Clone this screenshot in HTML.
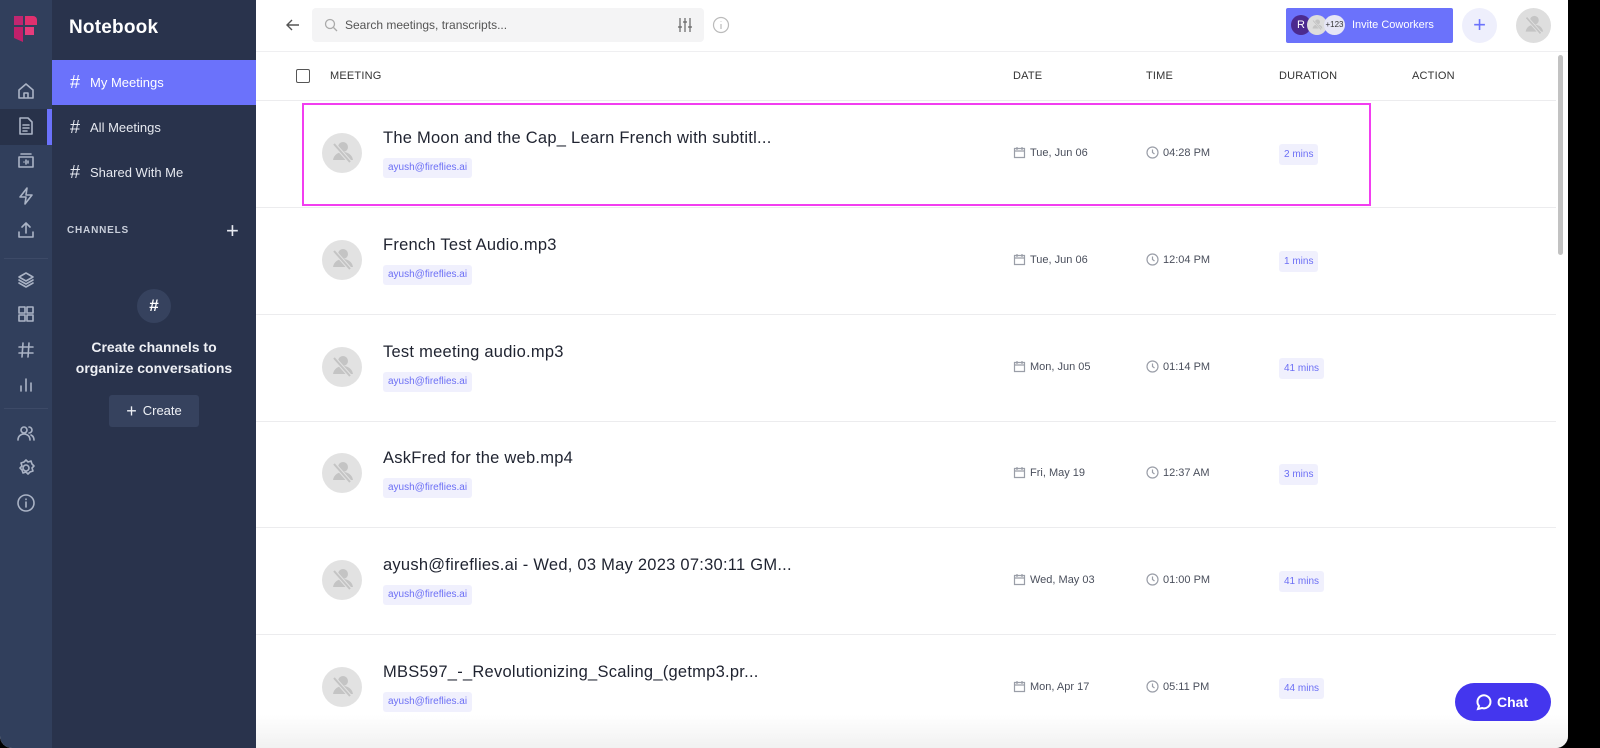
<!DOCTYPE html>
<html><head><meta charset="utf-8"><style>
*{box-sizing:border-box;margin:0;padding:0}
body{width:1600px;height:748px;background:#000;font-family:"Liberation Sans",sans-serif;overflow:hidden;position:relative}
.win{position:absolute;left:0;top:0;width:1568px;height:748px;background:#fff;border-radius:0 0 12px 12px;overflow:hidden}
.rail{position:absolute;left:0;top:0;width:52px;height:748px;background:#313f5c}
.side{position:absolute;left:52px;top:0;width:204px;height:748px;background:#29334c;color:#fff}
.ic{position:absolute;left:16px;width:20px;height:20px}
.ic svg{width:20px;height:20px;fill:none;stroke:#aab3c5;stroke-width:1.6;stroke-linecap:round;stroke-linejoin:round}
.nav{position:absolute;left:0;width:204px;height:45px;font-size:13px;display:flex;align-items:center;padding-left:18px;color:#e6e9f0}
.nav b{font-weight:normal;font-size:18px;margin-right:10px}
.main{position:absolute;left:256px;top:0;width:1312px;height:748px}
.row{position:absolute;left:0;width:1300px;height:107px;border-bottom:1px solid #ececee}
.av{position:absolute;left:66px;top:32px;width:40px;height:40px;border-radius:50%;background:#e2e2e2}
.av svg{width:40px;height:40px}
.title{position:absolute;left:127px;top:28px;font-size:16.5px;color:#1f2330;letter-spacing:.25px}
.tag{position:absolute;left:127px;top:57px;height:20px;padding:0 5px;background:#f0f0fd;color:#6c6ff5;font-size:10px;line-height:20px;border-radius:3px}
.dt{position:absolute;top:45px;font-size:11px;color:#4a4f5c;display:flex;align-items:center}
.dt svg{width:13px;height:13px;margin-right:4px;fill:none;stroke:#9a9ea8;stroke-width:1.2}
.dur{position:absolute;left:1023px;top:43px;height:21px;padding:0 5px;background:#f0f0fd;color:#6c6ff5;font-size:10px;line-height:21px;border-radius:3px}
.hd{position:absolute;top:70px;font-size:11px;color:#333;letter-spacing:.2px}
</style></head><body><div class="win">
<svg width="0" height="0" style="position:absolute"><defs><symbol id="p" viewBox="0 0 40 40"><circle cx="21" cy="14" r="5" fill="#c4c4c4"/><path d="M11 27c1-6 6-8 10-8s9 2 10 8z" fill="#c4c4c4"/><path d="M12 11l16 18" stroke="#e2e2e2" stroke-width="4"/><path d="M12 11l16 18" stroke="#c4c4c4" stroke-width="2"/></symbol></defs></svg>
<div class="rail">
<svg style="position:absolute;left:12px;top:14px" width="26" height="30" viewBox="0 0 26 30"><path d="M2 2h9v9H2z" fill="#c02670"/><path d="M13 2h8a4 4 0 0 1 4 4v5H13z" fill="#e0306e"/><path d="M2 13h9v15l-9-4z" fill="#c0206a"/><path d="M13 13h9v8h-9z" fill="#e73c7c"/></svg>
<div class="ic" style="top:81px"><svg viewBox="0 0 20 20"><path d="M3 9l7-6 7 6v8H3z M8 17v-5h4v5"/></svg></div>
<div style="position:absolute;left:0;top:109px;width:52px;height:36px;background:#28324a"></div>
<div style="position:absolute;left:47px;top:109px;width:5px;height:36px;background:#6b72fb"></div>
<div class="ic" style="top:116px"><svg viewBox="0 0 20 20"><path d="M4 2h8l4 4v12H4z M7 9h6 M7 12h6 M7 15h4"/></svg></div>
<div class="ic" style="top:151px"><svg viewBox="0 0 20 20"><path d="M5 3h10 M3 6h14v10H3z M8 11v0 M10 9v4 M12 10v2"/></svg></div>
<div class="ic" style="top:186px"><svg viewBox="0 0 20 20"><path d="M11 2L4 11h6l-1 7 7-9h-6z"/></svg></div>
<div class="ic" style="top:220px"><svg viewBox="0 0 20 20"><path d="M3 12v5h14v-5 M10 3v10 M6 7l4-4 4 4"/></svg></div>
<div style="position:absolute;left:4px;top:258px;width:44px;height:1px;background:#3d4a67"></div>
<div class="ic" style="top:270px"><svg viewBox="0 0 20 20"><path d="M10 3l7 4-7 4-7-4z M3 10l7 4 7-4 M3 13l7 4 7-4"/></svg></div>
<div class="ic" style="top:304px"><svg viewBox="0 0 20 20"><path d="M3 3h6v6H3z M11 3h6v6h-6z M3 11h6v6H3z M11 11h6v6h-6z"/></svg></div>
<div class="ic" style="top:340px"><svg viewBox="0 0 20 20"><path d="M7 3l-1 14 M13 3l-1 14 M3 7h14 M3 13h14"/></svg></div>
<div class="ic" style="top:374px"><svg viewBox="0 0 20 20"><path d="M5 17v-5 M10 17V5 M15 17v-8"/></svg></div>
<div style="position:absolute;left:4px;top:408px;width:44px;height:1px;background:#3d4a67"></div>
<div class="ic" style="top:423px"><svg viewBox="0 0 20 20"><circle cx="8" cy="7" r="3"/><path d="M2 17c0-4 3-6 6-6s6 2 6 6 M13 4a3 3 0 0 1 0 6 M15 12c2 1 3 3 3 5"/></svg></div>
<div class="ic" style="top:458px"><svg viewBox="0 0 20 20"><circle cx="10" cy="10" r="3"/><path d="M10 2l2 2 3-1 1 3 2 2-2 2 1 3-3 1-2 2-2-2-3 1-1-3-2-2 2-2-1-3 3-1z"/></svg></div>
<div class="ic" style="top:493px"><svg viewBox="0 0 20 20"><circle cx="10" cy="10" r="8"/><path d="M10 9v5 M10 6v.5"/></svg></div>
</div>
<div class="side">
<div style="position:absolute;left:17px;top:17px;font-size:19px;font-weight:bold;letter-spacing:.2px">Notebook</div>
<div class="nav" style="top:60px;background:#6b72fb;color:#fff"><b>#</b>My Meetings</div>
<div class="nav" style="top:105px"><b>#</b>All Meetings</div>
<div class="nav" style="top:150px"><b>#</b>Shared With Me</div>
<div style="position:absolute;left:15px;top:225px;font-size:10px;font-weight:bold;color:#c9cfdb;letter-spacing:.8px">CHANNELS</div>
<div style="position:absolute;left:174px;top:218px;font-size:22px;color:#e6e9f0">+</div>
<div style="position:absolute;left:85px;top:289px;width:34px;height:34px;border-radius:50%;background:#36425e;text-align:center;line-height:34px;font-size:17px;font-weight:bold">#</div>
<div style="position:absolute;left:0;top:337px;width:204px;text-align:center;font-size:14px;font-weight:bold;line-height:21px;color:#eef0f5">Create channels to<br>organize conversations</div>
<div style="position:absolute;left:57px;top:395px;width:90px;height:32px;background:#36425e;border-radius:3px;font-size:13px;line-height:32px;text-align:center;color:#eef0f5"><span style="font-size:18px;vertical-align:-2px;margin-right:6px">+</span>Create</div>
</div>
<div class="main">
<svg style="position:absolute;left:29px;top:17px" width="16" height="16" viewBox="0 0 16 16" fill="none" stroke="#555" stroke-width="1.4"><path d="M14 8H2 M7 3L2 8l5 5"/></svg>
<div style="position:absolute;left:56px;top:8px;width:392px;height:34px;background:#f4f4f5;border-radius:4px">
<svg style="position:absolute;left:12px;top:10px" width="14" height="14" viewBox="0 0 14 14" fill="none" stroke="#aaa" stroke-width="1.3"><circle cx="6" cy="6" r="4.5"/><path d="M9.5 9.5L13 13"/></svg>
<div style="position:absolute;left:33px;top:10px;font-size:12px;color:#555">Search meetings, transcripts...</div>
<svg style="position:absolute;left:365px;top:9px" width="16" height="16" viewBox="0 0 16 16" fill="none" stroke="#666" stroke-width="1.2"><path d="M3 1v14 M8 1v14 M13 1v14 M1 10h4 M6 5h4 M11 10h4"/></svg>
</div>
<svg style="position:absolute;left:456px;top:16px" width="18" height="18" viewBox="0 0 18 18" fill="none" stroke="#bbb" stroke-width="1.2"><circle cx="9" cy="9" r="7.5"/><path d="M9 8v5 M9 5v.5"/></svg>
<div style="position:absolute;left:1030px;top:8px;width:167px;height:35px;background:#6b72fb;border-radius:2px">
<div style="position:absolute;left:5px;top:7px;width:20px;height:20px;border-radius:50%;background:#4b2a8f;color:#fff;font-size:11px;text-align:center;line-height:20px">R</div>
<div style="position:absolute;left:21px;top:7px;width:20px;height:20px;border-radius:50%;background:#ddd;overflow:hidden"><svg width="20" height="20"><use href="#p"/></svg></div>
<div style="position:absolute;left:38px;top:7px;width:21px;height:20px;border-radius:50%;background:#e6e6f6;color:#333;font-size:8px;text-align:center;line-height:20px">+123</div>
<div style="position:absolute;left:66px;top:0;line-height:35px;color:#fff;font-size:11px">Invite Coworkers</div>
</div>
<div style="position:absolute;left:1206px;top:8px;width:35px;height:35px;border-radius:50%;background:#eeeffc;color:#6b72fb;font-size:22px;text-align:center;line-height:34px">+</div>
<div style="position:absolute;left:1260px;top:8px;width:35px;height:35px;border-radius:50%;background:#dedede"><svg width="35" height="35"><use href="#p"/></svg></div>
<div style="position:absolute;left:0;top:51px;width:1312px;height:1px;background:#efeff1"></div>
<div style="position:absolute;left:40px;top:69px;width:14px;height:14px;border:1.5px solid #555;border-radius:2px"></div>
<div class="hd" style="left:74px">MEETING</div><div class="hd" style="left:757px">DATE</div><div class="hd" style="left:890px">TIME</div><div class="hd" style="left:1023px">DURATION</div><div class="hd" style="left:1156px">ACTION</div>
<div style="position:absolute;left:0;top:100px;width:1300px;height:1px;background:#ececee"></div>
<div style="position:absolute;left:1302px;top:55px;width:5px;height:200px;background:#c2c2c2;border-radius:3px"></div>

<div class="row" style="top:101px"><div class="av"><svg><use href="#p"/></svg></div><div class="title">The Moon and the Cap_ Learn French with subtitl...</div><div class="tag">ayush@fireflies.ai</div><div class="dt" style="left:757px"><svg viewBox="0 0 13 13"><path d="M1.5 2.5h10v9h-10z M1.5 5h10 M4 1v3 M9 1v3"/></svg>Tue, Jun 06</div><div class="dt" style="left:890px"><svg viewBox="0 0 13 13"><circle cx="6.5" cy="6.5" r="5.5"/><path d="M6.5 3.5v3l2 1.5"/></svg>04:28 PM</div><div class="dur">2 mins</div></div>
<div class="row" style="top:208px"><div class="av"><svg><use href="#p"/></svg></div><div class="title">French Test Audio.mp3</div><div class="tag">ayush@fireflies.ai</div><div class="dt" style="left:757px"><svg viewBox="0 0 13 13"><path d="M1.5 2.5h10v9h-10z M1.5 5h10 M4 1v3 M9 1v3"/></svg>Tue, Jun 06</div><div class="dt" style="left:890px"><svg viewBox="0 0 13 13"><circle cx="6.5" cy="6.5" r="5.5"/><path d="M6.5 3.5v3l2 1.5"/></svg>12:04 PM</div><div class="dur">1 mins</div></div>
<div class="row" style="top:315px"><div class="av"><svg><use href="#p"/></svg></div><div class="title">Test meeting audio.mp3</div><div class="tag">ayush@fireflies.ai</div><div class="dt" style="left:757px"><svg viewBox="0 0 13 13"><path d="M1.5 2.5h10v9h-10z M1.5 5h10 M4 1v3 M9 1v3"/></svg>Mon, Jun 05</div><div class="dt" style="left:890px"><svg viewBox="0 0 13 13"><circle cx="6.5" cy="6.5" r="5.5"/><path d="M6.5 3.5v3l2 1.5"/></svg>01:14 PM</div><div class="dur">41 mins</div></div>
<div class="row" style="top:421px"><div class="av"><svg><use href="#p"/></svg></div><div class="title">AskFred for the web.mp4</div><div class="tag">ayush@fireflies.ai</div><div class="dt" style="left:757px"><svg viewBox="0 0 13 13"><path d="M1.5 2.5h10v9h-10z M1.5 5h10 M4 1v3 M9 1v3"/></svg>Fri, May 19</div><div class="dt" style="left:890px"><svg viewBox="0 0 13 13"><circle cx="6.5" cy="6.5" r="5.5"/><path d="M6.5 3.5v3l2 1.5"/></svg>12:37 AM</div><div class="dur">3 mins</div></div>
<div class="row" style="top:528px"><div class="av"><svg><use href="#p"/></svg></div><div class="title">ayush@fireflies.ai - Wed, 03 May 2023 07:30:11 GM...</div><div class="tag">ayush@fireflies.ai</div><div class="dt" style="left:757px"><svg viewBox="0 0 13 13"><path d="M1.5 2.5h10v9h-10z M1.5 5h10 M4 1v3 M9 1v3"/></svg>Wed, May 03</div><div class="dt" style="left:890px"><svg viewBox="0 0 13 13"><circle cx="6.5" cy="6.5" r="5.5"/><path d="M6.5 3.5v3l2 1.5"/></svg>01:00 PM</div><div class="dur">41 mins</div></div>
<div class="row" style="top:635px;border:none"><div class="av"><svg><use href="#p"/></svg></div><div class="title">MBS597_-_Revolutionizing_Scaling_(getmp3.pr...</div><div class="tag">ayush@fireflies.ai</div><div class="dt" style="left:757px"><svg viewBox="0 0 13 13"><path d="M1.5 2.5h10v9h-10z M1.5 5h10 M4 1v3 M9 1v3"/></svg>Mon, Apr 17</div><div class="dt" style="left:890px"><svg viewBox="0 0 13 13"><circle cx="6.5" cy="6.5" r="5.5"/><path d="M6.5 3.5v3l2 1.5"/></svg>05:11 PM</div><div class="dur">44 mins</div></div>

<div style="position:absolute;left:46px;top:103px;width:1069px;height:103px;border:2px solid #f23ef0"></div>
<div style="position:absolute;left:0;top:715px;width:1312px;height:33px;background:linear-gradient(rgba(255,255,255,0),#f1f1f1)"></div>
<div style="position:absolute;left:1199px;top:683px;width:96px;height:38px;border-radius:19px;background:#4436ee;color:#fff;font-weight:bold;font-size:14px;line-height:38px;padding-left:42px">Chat
<svg style="position:absolute;left:19px;top:10px" width="18" height="18" viewBox="0 0 18 18" fill="none" stroke="#fff" stroke-width="2"><path d="M4 16l1-3a6.5 6.5 0 1 1 3 2z"/></svg></div>
</div>
</div></body></html>
